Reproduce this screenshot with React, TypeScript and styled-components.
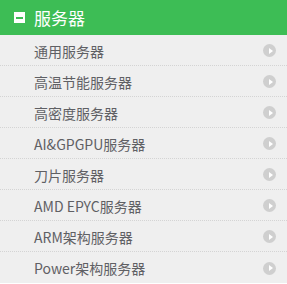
import React from "react";
import styled, { createGlobalStyle } from "styled-components";

const Global = createGlobalStyle`
  html, body { margin: 0; padding: 0; background: #fff; }
  body { font-family: "Noto Sans CJK SC", "Noto Sans", sans-serif; }
`;

const Panel = styled.div`
  width: 287px;
  background: #efefef;
`;

const Header = styled.div`
  height: 35px;
  background: #3dbd55;
  display: flex;
  align-items: center;
  padding-left: 14px;
  gap: 9px;
  color: #fff;
  font-size: 17px;
  font-weight: 400;
`;

const MinusBox = styled.span`
  width: 11px;
  height: 11px;
  background: #fff;
  display: flex;
  align-items: center;
  justify-content: center;
  &::after {
    content: "";
    width: 7px;
    height: 2px;
    background: #3dbd55;
  }
`;

const List = styled.ul`
  list-style: none;
  margin: 0;
  padding: 0;
`;

const Row = styled.li`
  display: flex;
  align-items: center;
  justify-content: space-between;
  padding: 1px 11px 0 34px;
  box-sizing: border-box;
  height: 31px;
  border-bottom: 1px dotted #d4d4d4;
  color: #5f6064;
  font-size: 14px;
  &:last-child { border-bottom: none; }
`;

const Arrow = styled.span`
  width: 13px;
  height: 13px;
  border-radius: 50%;
  background: #cfcfcf;
  display: flex;
  align-items: center;
  justify-content: center;
  &::after {
    content: "";
    margin-left: 2px;
    border-left: 4px solid #fff;
    border-top: 3px solid transparent;
    border-bottom: 3px solid transparent;
  }
`;

const items = [
  "通用服务器",
  "高温节能服务器",
  "高密度服务器",
  "AI&GPGPU服务器",
  "刀片服务器",
  "AMD EPYC服务器",
  "ARM架构服务器",
  "Power架构服务器",
];

export default function App() {
  return (
    <>
      <Global />
      <Panel>
        <Header>
          <MinusBox />
          服务器
        </Header>
        <List>
          {items.map((t) => (
            <Row key={t}>
              <span>{t}</span>
              <Arrow />
            </Row>
          ))}
        </List>
      </Panel>
    </>
  );
}
